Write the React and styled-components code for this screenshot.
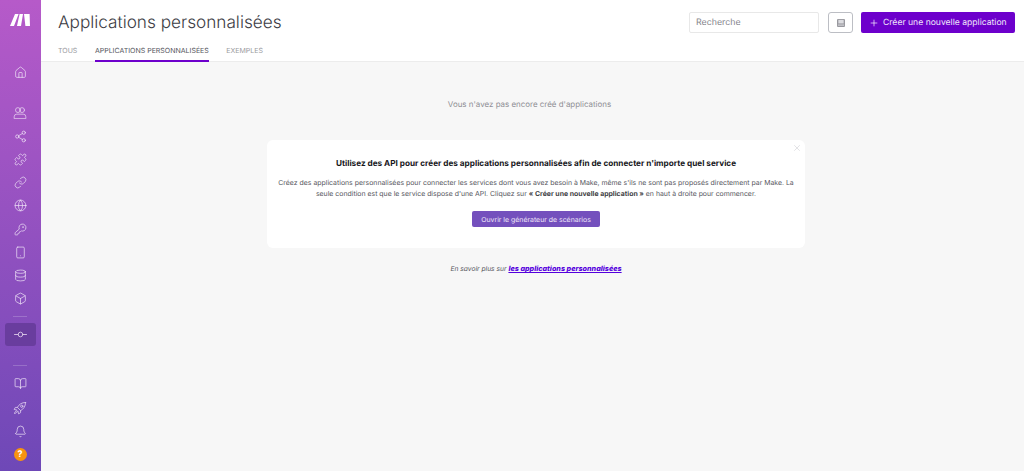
import React from "react";
import styled, { createGlobalStyle } from "styled-components";
import { House, Share2, Puzzle, Link, Globe, KeyRound, Smartphone, Database, Box, BookOpen, Bell, Plus, X } from "lucide-react";

const Global = createGlobalStyle`
  html, body { margin: 0; padding: 0; height: 100%; }
  #root { height: 100%; }
  body { font-family: Inter, "Liberation Sans", sans-serif; background: #f7f7f7; overflow: hidden; text-rendering: geometricPrecision; }
`;
const Page = styled.div`display: flex; width: 1024px; height: 471px;`;
const Sidebar = styled.nav`
  width: 41px; flex: none; display: flex; flex-direction: column; align-items: center;
  background: linear-gradient(180deg, #b65ac9 0%, #6e48b7 100%);
  padding: 13px 1px 0 0; box-sizing: border-box;
`;
const Logo = styled.svg`width: 20px; height: 14px; display: block; margin-bottom: 33.5px; flex: none;`;
const NavItem = styled.div`
  width: 31px; height: ${p => p.$h || 23.2}px; display: flex; align-items: center; justify-content: center;
  flex: none; color: #f0e4f6; border-radius: 3px;
  margin-top: ${p => p.$mt || 0}px;
  background: ${p => (p.$active ? "#693d9e" : "transparent")};
`;
const Glyph = styled.svg`
  width: ${p => p.$size || 13}px; height: ${p => p.$size || 13}px; display: block; opacity: .85;
  fill: none; stroke: currentColor; stroke-width: ${p => p.$sw || 1.4}; stroke-linecap: round; stroke-linejoin: round;
`;
const Divider = styled.div`width: 14px; height: 1px; background: rgba(255,255,255,.2); flex: none; margin-top: ${p => p.$mt}px;`;
const Help = styled.div`
  width: 13px; height: 13px; border-radius: 50%; background: #f7930f; color: #fff;
  font-size: 9px; font-weight: 700; display: flex; align-items: center; justify-content: center;
`;
const Main = styled.main`flex: 1; min-width: 0; display: flex; flex-direction: column;`;
const Header = styled.header`
  height: 62px; box-sizing: border-box; background: #fff; border-bottom: 1px solid #ececec;
  padding: 0 9px 0 17px; display: flex; justify-content: space-between; flex: none;
`;
const HeaderLeft = styled.div`display: flex; flex-direction: column; height: 62px;`;
const Title = styled.h1`
  margin: 11.5px 0 0; font-size: 17.2px; line-height: 22px; font-weight: 300; color: #3c3c44;
`;
const Tabs = styled.div`display: flex; gap: 17.5px; margin-top: 11.5px;`;
const Tab = styled.div`
  font-size: 7px; line-height: 11px; height: 17px; box-sizing: border-box;
  color: ${p => (p.$active ? "#55555c" : "#9a9aa0")};
  border-bottom: ${p => (p.$active ? "2px solid #6d00cc" : "2px solid transparent")};
`;
const Actions = styled.div`display: flex; align-items: center; height: 21px; margin-top: 12px;`;
const Search = styled.div`
  width: 130px; height: 21px; box-sizing: border-box; border: 1px solid #e8e8e8; border-radius: 2px;
  font-size: 8.8px; color: #85858c; padding-left: 6px; display: flex; align-items: center; margin-right: 9px;
`;
const IconButton = styled.div`
  width: 25px; height: 21px; box-sizing: border-box; border: 1.5px solid #bcbec4; border-radius: 3px;
  display: flex; align-items: center; justify-content: center; margin-right: 8px;
`;
const SaveGlyph = styled.svg`width: 8px; height: 8px; display: block;`;
const PrimaryButton = styled.div`
  width: 154px; height: 21px; box-sizing: border-box; background: #6d00cc; border-radius: 2px; color: #f0e6fa;
  font-size: 8.6px; display: flex; align-items: center; gap: 4px; padding-left: 8px; white-space: nowrap;
  svg { color: #fff; }
`;
const Content = styled.section`flex: 1; display: flex; flex-direction: column; align-items: center; padding-left: 7px;`;
const Empty = styled.p`margin: 36px 13px 0 0; font-size: 7.95px; line-height: 12px; color: #8f8f95;`;
const Card = styled.div`
  position: relative; width: 538px; height: 108px; margin-top: 30px; box-sizing: border-box; background: #fff; border-radius: 6px;
  display: flex; flex-direction: column; align-items: center; padding-top: 16.5px;
`;
const Close = styled.div`position: absolute; top: 3px; right: 3px; color: #bcbcc2; display: flex;`;
const CardTitle = styled.h2`margin: 0; font-size: 8.2px; line-height: 13px; font-weight: 700; color: #17171b; white-space: nowrap;`;
const CardText = styled.p`
  margin: 7.5px 0 0; width: 530px; text-align: center; font-size: 6.92px; line-height: 11px; color: #56565e;
  strong { font-weight: 700; color: #3f3f45; }
`;
const CardButton = styled.div`
  margin-top: 12px; width: 128px; height: 16px; border-radius: 2px; background: #7450bd; color: #eee6f8;
  font-size: 6.93px; display: flex; align-items: center; justify-content: center; white-space: nowrap;
`;
const More = styled.p`
  margin: 15px 0 0; font-size: 6.7px; line-height: 11px; font-style: italic; color: #55555c;
  a { color: #5500dd; font-size: 7.2px; font-weight: 800; text-decoration: underline; }
`;
const ic = { size: 13, strokeWidth: 1.3 };

export default function App() {
  return (
    <Page>
      <Global />
      <Sidebar>
        <Logo viewBox="0 0 20 14">
          <path fill="#fff" d="M5 1h3.6L4 13H0zM9.6 1h3.4l-2 12H7zM14 1h5.6l.4 12h-4.6z" />
        </Logo>
        <NavItem $h={23}><House {...ic} /></NavItem>
        <NavItem $mt={18}>
          <Glyph viewBox="0 0 24 24" $size={14}>
            <circle cx="8.5" cy="7" r="4.2" />
            <circle cx="15.5" cy="7" r="4.2" />
            <path d="M2 21v-2.5A4.5 4.5 0 0 1 6.5 14h11a4.5 4.5 0 0 1 4.5 4.5V21z" />
          </Glyph>
        </NavItem>
        <NavItem><Share2 {...ic} /></NavItem>
        <NavItem><Puzzle {...ic} /></NavItem>
        <NavItem><Link {...ic} /></NavItem>
        <NavItem><Globe {...ic} /></NavItem>
        <NavItem><KeyRound {...ic} /></NavItem>
        <NavItem><Smartphone {...ic} /></NavItem>
        <NavItem><Database {...ic} /></NavItem>
        <NavItem><Box {...ic} /></NavItem>
        <Divider $mt={6} />
        <NavItem $active $h={23} $mt={6}>
          <Glyph viewBox="0 0 13 13" $sw={0.9}>
            <circle cx="6.5" cy="6.5" r="2.3" />
            <path d="M0.5 6.5h3.700M9 6.5h3.500" />
          </Glyph>
        </NavItem>
        <Divider $mt={19} />
        <NavItem $mt={6} $h={23.6}><BookOpen {...ic} /></NavItem>
        <NavItem $h={23.6}>
          <Glyph viewBox="0 0 24 24" $size={14}>
            <path d="M21.5 2.5c-6.5 0-11 3-14 8.500l5.500 5.500c5.500-3 8.500-7.500 8.500-14z" />
            <circle cx="15" cy="9" r="2" />
            <path d="M7.5 11H4l-2 3.500 4.500 1M13 16.500V20l-3.500 2-1-4.500" />
            <path d="M5.500 17c-1.500.5-2.500 2-3 4.500 2.500-.5 4-1.500 4.500-3z" />
          </Glyph>
        </NavItem>
        <NavItem $h={23.6}><Bell {...ic} /></NavItem>
        <NavItem $h={23.6}><Help>?</Help></NavItem>
      </Sidebar>
      <Main>
        <Header>
          <HeaderLeft>
            <Title>Applications personnalisées</Title>
            <Tabs>
              <Tab>TOUS</Tab>
              <Tab $active>APPLICATIONS PERSONNALISÉES</Tab>
              <Tab>EXEMPLES</Tab>
            </Tabs>
          </HeaderLeft>
          <Actions>
            <Search>Recherche</Search>
            <IconButton>
              <SaveGlyph viewBox="0 0 9 9">
                <rect width="9" height="9" rx="1.2" fill="#98989e" />
                <rect x="1.5" y="1" width="6" height="4" fill="#dcdce0" />
                <rect x="1" y="6.2" width="7" height="1.3" fill="#d4d4d9" />
              </SaveGlyph>
            </IconButton>
            <PrimaryButton><Plus size={10} strokeWidth={1.6} />Créer une nouvelle application</PrimaryButton>
          </Actions>
        </Header>
        <Content>
          <Empty>Vous n'avez pas encore créé d'applications</Empty>
          <Card>
            <Close><X size={10} strokeWidth={1} /></Close>
            <CardTitle>Utilisez des API pour créer des applications personnalisées afin de connecter n'importe quel service</CardTitle>
            <CardText>
              Créez des applications personnalisées pour connecter les services dont vous avez besoin à Make, même s'ils ne sont pas proposés directement par Make. La seule condition est que le service dispose d'une API. Cliquez sur <strong>« Créer une nouvelle application »</strong> en haut à droite pour commencer.
            </CardText>
            <CardButton>Ouvrir le générateur de scénarios</CardButton>
          </Card>
          <More>En savoir plus sur <a>les applications personnalisées</a></More>
        </Content>
      </Main>
    </Page>
  );
}
